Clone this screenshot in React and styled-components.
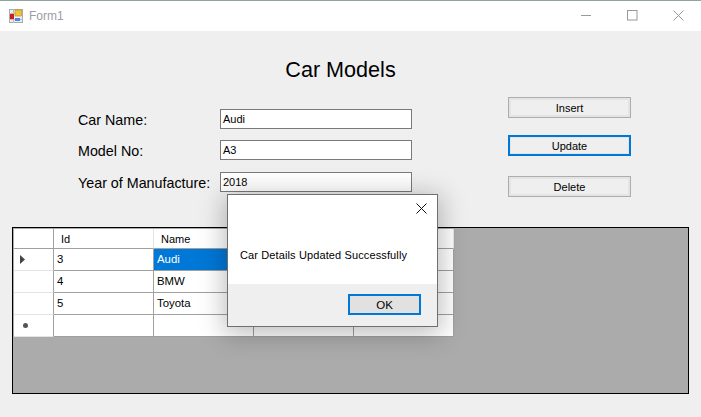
import React from "react";
import styled, { createGlobalStyle } from "styled-components";

const Global = createGlobalStyle`
  html, body { margin: 0; padding: 0; background: #efefef; }
  body { font-family: "Liberation Sans", Arial, sans-serif; color: #000; }
  * { box-sizing: border-box; }
`;

const Win = styled.div`
  position: relative;
  width: 701px;
  height: 417px;
  overflow: hidden;
  background: #efefef;
  border-top: 1px solid #8fa3a3;
`;
const TitleBar = styled.div`
  height: 30px;
  background: #fff;
  display: flex;
  align-items: center;
  padding: 0 0 1px 9px;
`;
const AppIcon = styled.svg`
  width: 14px;
  height: 14px;
  margin-right: 6px;
`;
const WinTitle = styled.span`
  font-size: 12px;
  color: #a09ca4;
  flex: 1;
`;
const WinBtn = styled.svg`
  width: 11px;
  height: 11px;
  flex: none;
  margin-right: ${p => p.$mr}px;
`;
const Client = styled.div`
  height: 386px;
  padding: 12px 12px 0;
  display: flex;
  flex-direction: column;
`;
const Heading = styled.h1`
  margin: 14px 0 0;
  padding-right: 20px;
  height: 26px;
  line-height: 26px;
  font-size: 21.6px;
  font-weight: 400;
  text-align: center;
`;
const Top = styled.div`
  display: flex;
  height: 158px;
  margin-top: -14px;
`;
const Fields = styled.div`
  margin-left: 66px;
  width: 430px;
  padding-top: 40px;
  display: flex;
  flex-direction: column;
`;
const FieldRow = styled.div`
  display: flex;
  align-items: center;
  height: 20px;
  margin-bottom: ${p => p.$mb}px;
`;
const FieldLabel = styled.label`
  width: 142px;
  font-size: 14.3px;
  position: relative;
  top: 1px;
`;
const TextBox = styled.div`
  width: 192px;
  height: 20px;
  background: #fff;
  border: 1px solid #7a7a7a;
  font-size: 11px;
  line-height: 18px;
  padding-left: 2px;
`;
const Actions = styled.div`
  display: flex;
  flex-direction: column;
  padding-top: 28px;
`;
const Btn = styled.button`
  width: 123px;
  height: 21px;
  padding: 0;
  margin-bottom: ${p => p.$mb}px;
  font: 11px "Liberation Sans", Arial, sans-serif;
  color: #000;
  background: #efefef;
  border: ${p => (p.$focus ? "2px solid #0078d7" : "1px solid #adadad")};
  box-shadow: inset 0 0 0 ${p => (p.$focus ? "1px" : "2px")} #e4e4e4;
`;
const GridBox = styled.div`
  height: 167px;
  width: 677px;
  background: #ababab;
  border: 1px solid #000;
  padding: 1px;
`;
const Table = styled.div`
  display: grid;
  grid-template-columns: 40px repeat(4, 100px);
  grid-template-rows: 20px repeat(4, 22px);
  width: 440px;
`;
const Corner = styled.div`
  background: #fff;
  border-right: 1px solid #a0a0a0;
  border-bottom: 1px solid #a0a0a0;
  display: flex;
  align-items: center;
  padding-left: 6px;
`;
const RowHead = styled(Corner)`
  border-bottom-color: #e4e4e4;
`;
const HeadCell = styled.div`
  background: #fff;
  border-right: 1px solid #e4e4e4;
  border-bottom: 1px solid #a0a0a0;
  font-size: 11px;
  line-height: 21px;
  padding-left: 7px;
`;
const Cell = styled.div`
  background: ${p => (p.$sel ? "#0078d7" : "#fff")};
  color: ${p => (p.$sel ? "#fff" : "#000")};
  border-right: 1px solid #a0a0a0;
  border-bottom: 1px solid #a0a0a0;
  font-size: 11.4px;
  line-height: 21px;
  padding-left: 3px;
`;
const Arrow = styled.svg`
  width: 5px;
  height: 9px;
`;
const Star = styled.span`
  width: 5px;
  height: 5px;
  margin-left: 3px;
  border-radius: 50%;
  background: #555;
`;
const Dialog = styled.div`
  position: absolute;
  left: 227px;
  top: 193px;
  width: 211px;
  height: 133px;
  background: #fff;
  border: 1px solid #6f6f6f;
  box-shadow: 0 4px 24px 3px rgba(0, 0, 0, 0.26);
  display: flex;
  flex-direction: column;
`;
const DialogTop = styled.div`
  height: 30px;
  display: flex;
  justify-content: flex-end;
  align-items: flex-start;
  padding: 8px 10px 0 0;
`;
const CloseIcon = styled.svg`
  width: 11px;
  height: 11px;
`;
const Message = styled.div`
  flex: 1;
  font-size: 11px;
  letter-spacing: 0.12px;
  padding: 24px 0 0 12px;
`;
const DialogFoot = styled.div`
  height: 42px;
  background: #efefef;
  display: flex;
  justify-content: flex-end;
  align-items: flex-start;
  padding: 10px 16px 0 0;
`;
const OkBtn = styled.button`
  width: 73px;
  height: 21px;
  padding: 0;
  background: #e1e1e1;
  border: 2px solid #0078d7;
  font: 11.5px "Liberation Sans", Arial, sans-serif;
  color: #000;
`;

const rows = [
  { id: "3", name: "Audi", sel: true },
  { id: "4", name: "BMW" },
  { id: "5", name: "Toyota" },
];

export default function App() {
  return (
    <Win>
      <Global />
      <TitleBar>
        <AppIcon viewBox="0 0 14 14">
          <rect x="0.5" y="0.5" width="13" height="13" fill="#eee" stroke="#aaa" />
          <path d="M0 4.5h14M0 10.5h14M4.5 0v14" stroke="#bbb" />
          <rect x="1" y="5" width="4" height="5" fill="#c8201c" />
          <rect x="6" y="1" width="6.5" height="6" fill="#f3c23c" stroke="#b58a1e" strokeWidth="0.6" />
          <rect x="6" y="9" width="5" height="3" fill="#4f86e0" />
        </AppIcon>
        <WinTitle>Form1</WinTitle>
        <WinBtn $mr={35} viewBox="0 0 11 11"><path d="M0 5.5h10" stroke="#999" /></WinBtn>
        <WinBtn $mr={35} viewBox="0 0 11 11"><rect x="0.5" y="0.5" width="9.5" height="9.5" fill="none" stroke="#999" /></WinBtn>
        <WinBtn $mr={17} viewBox="0 0 11 11"><path d="M0.5 0.5l10 10M10.5 0.5l-10 10" stroke="#999" /></WinBtn>
      </TitleBar>
      <Client>
        <Heading>Car Models</Heading>
        <Top>
          <Fields>
            <FieldRow $mb={11}><FieldLabel>Car Name:</FieldLabel><TextBox>Audi</TextBox></FieldRow>
            <FieldRow $mb={12}><FieldLabel>Model No:</FieldLabel><TextBox>A3</TextBox></FieldRow>
            <FieldRow $mb={0}><FieldLabel>Year of Manufacture:</FieldLabel><TextBox>2018</TextBox></FieldRow>
          </Fields>
          <Actions>
            <Btn $mb={17}>Insert</Btn>
            <Btn $mb={20} $focus>Update</Btn>
            <Btn $mb={0}>Delete</Btn>
          </Actions>
        </Top>
        <GridBox>
          <Table>
            <Corner />
            <HeadCell>Id</HeadCell>
            <HeadCell>Name</HeadCell>
            <HeadCell />
            <HeadCell />
            {rows.map(r => (
              <React.Fragment key={r.id}>
                <RowHead>
                  {r.sel && <Arrow viewBox="0 0 5 9"><path d="M0 0l5 4.5L0 9z" fill="#444" /></Arrow>}
                </RowHead>
                <Cell>{r.id}</Cell>
                <Cell $sel={r.sel}>{r.name}</Cell>
                <Cell />
                <Cell />
              </React.Fragment>
            ))}
            <RowHead><Star /></RowHead>
            <Cell />
            <Cell />
            <Cell />
            <Cell />
          </Table>
        </GridBox>
      </Client>
      <Dialog>
        <DialogTop>
          <CloseIcon viewBox="0 0 11 11"><path d="M0.5 0.5l10 10M10.5 0.5l-10 10" stroke="#111" /></CloseIcon>
        </DialogTop>
        <Message>Car Details Updated Successfully</Message>
        <DialogFoot><OkBtn>OK</OkBtn></DialogFoot>
      </Dialog>
    </Win>
  );
}
